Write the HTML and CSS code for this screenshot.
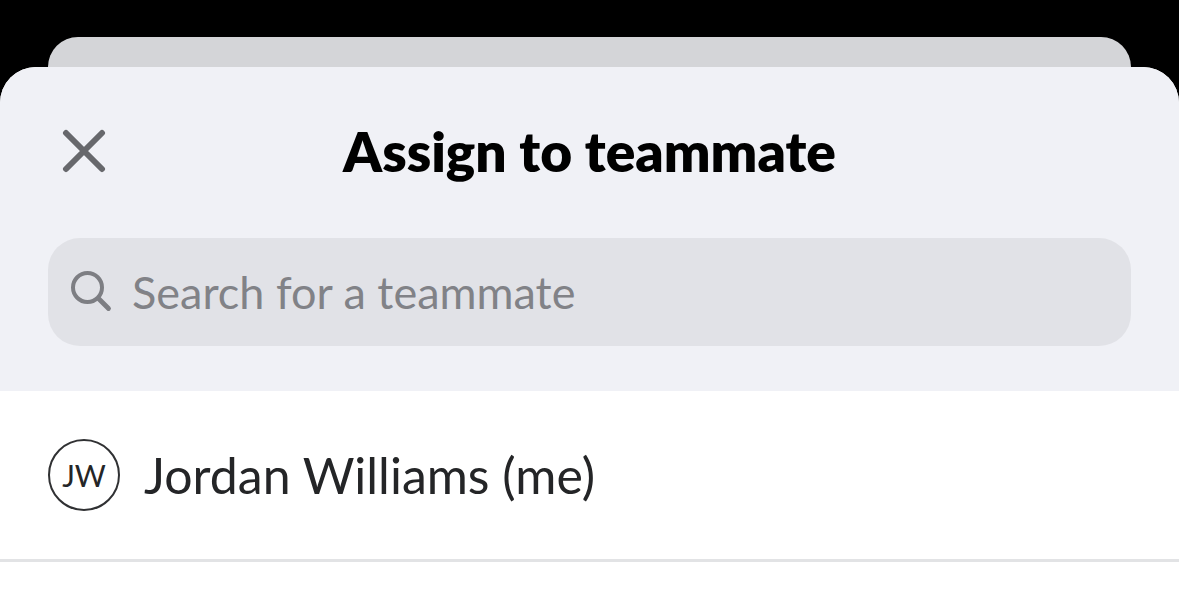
FILE: index.html
```html
<!DOCTYPE html>
<html lang="en">
<head>
    <meta charset="UTF-8">
    <meta name="viewport" content="width=device-width, initial-scale=1.0">
    <title>Assign to teammate</title>
    <link rel="stylesheet" href="styles.css">
</head>
<body>
    <div class="sheet-behind"></div>
    <main class="sheet">
        <header class="sheet-header">
            <div class="title-bar">
                <button class="close-button" type="button" aria-label="Close">
                    <svg width="44" height="44" viewBox="0 0 44 44" fill="none" stroke="currentColor" stroke-width="6" stroke-linecap="round">
                        <path d="M4 4L40 40M40 4L4 40"/>
                    </svg>
                </button>
                <h1>Assign to teammate</h1>
            </div>
            <label class="search-box">
                <svg width="42" height="42" viewBox="0 0 42 42" fill="none" stroke="currentColor" stroke-width="4" stroke-linecap="round" aria-hidden="true">
                    <circle cx="17.5" cy="16.5" r="14.5"/>
                    <path d="M28.5 27.5L38.5 37.5" stroke-width="4.8"/>
                </svg>
                <input type="search" placeholder="Search for a teammate" aria-label="Search for a teammate">
            </label>
        </header>
        <ul class="teammates">
            <li>
                <button class="teammate" type="button">
                    <span class="avatar">JW</span>
                    <span class="name">Jordan Williams (me)</span>
                </button>
            </li>
        </ul>
    </main>
</body>
</html>
```
FILE: styles.css
```css
* {
    box-sizing: border-box;
}

body {
    display: flex;
    flex-direction: column;
    min-height: 100vh;
    margin: 0;
    padding-top: 37px;
    background: #000;
    color: #242527;
    font-family: Lato, "Open Sans", sans-serif;
}

button,
input {
    padding: 0;
    border: none;
    background: none;
    color: inherit;
    font: inherit;
}

button {
    cursor: pointer;
}

/* the sheet underneath peeks out above the current one */
.sheet-behind {
    height: 30px;
    margin: 0 48px;
    border-radius: 30px 30px 0 0;
    background: #d4d5d8;
}

.sheet {
    flex: 1;
    border-radius: 36px 36px 0 0;
    background: #fff;
    overflow: hidden;
}

.sheet-header {
    padding: 48px 48px 45px;
    background: #f0f1f6;
}

.title-bar {
    display: grid;
    grid-template-columns: 72px 1fr 72px;
    align-items: center;
    height: 72px;
    margin-bottom: 51px;
}

.title-bar h1 {
    margin: 0;
    color: #000;
    font-size: 55px;
    font-weight: 800;
    line-height: 72px;
    text-align: center;
    white-space: nowrap;
}

.close-button {
    display: flex;
    align-items: center;
    justify-content: center;
    height: 72px;
    color: #67686c;
}

.search-box {
    display: flex;
    align-items: center;
    gap: 20px;
    height: 108px;
    padding: 0 22px;
    border-radius: 32px;
    background: #e1e2e7;
    color: #7d7e83;
}

.search-box svg {
    flex: none;
}

.search-box input {
    flex: 1;
    min-width: 0;
    height: 100%;
    outline: none;
    font-size: 45px;
}

.search-box input::placeholder {
    color: #818287;
    opacity: 1;
}

.teammates {
    margin: 0;
    padding: 0;
    list-style: none;
}

.teammate {
    display: flex;
    align-items: center;
    gap: 24px;
    width: 100%;
    padding: 48px;
    border-bottom: 3px solid #e2e3e5;
    text-align: left;
}

.avatar {
    display: flex;
    flex: none;
    align-items: center;
    justify-content: center;
    width: 72px;
    height: 72px;
    border: 2px solid #303133;
    border-radius: 50%;
    font-size: 30px;
    font-weight: 400;
}

.name {
    font-size: 50px;
    font-weight: 400;
    line-height: 60px;
}
```
